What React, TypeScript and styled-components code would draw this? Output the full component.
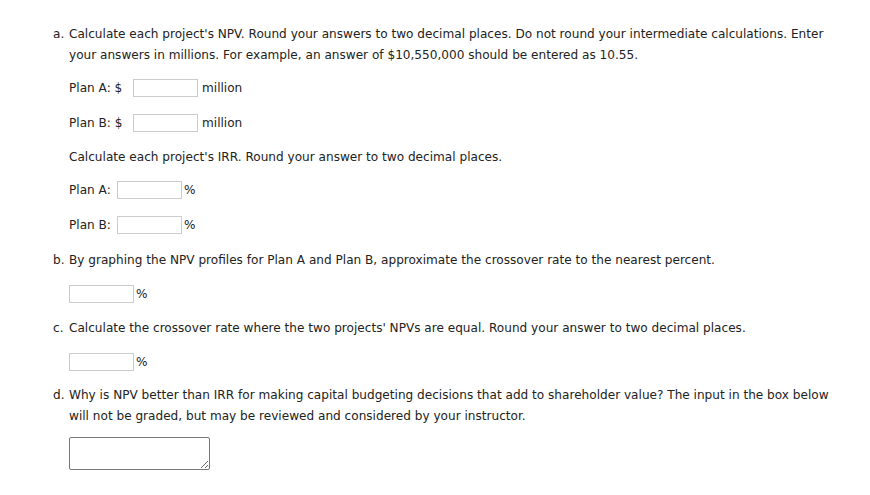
import React from 'react';
import styled, { createGlobalStyle } from 'styled-components';

const Global = createGlobalStyle`
  body {
    margin: 0;
    background: #fff;
  }
`;

const Page = styled.div`
  padding: 24px 0 0 53px;
  font-family: 'DejaVu Sans', Verdana, sans-serif;
  font-size: 12.1px;
  color: #222;
  width: 782px;
`;

const Part = styled.div<{ gap?: number }>`
  display: flex;
  margin-bottom: ${(p) => p.gap ?? 0}px;
`;

const Letter = styled.span`
  width: 16px;
  flex: none;
  line-height: 21px;
`;

const Body = styled.div`
  flex: 1;
`;

const Prompt = styled.p<{ top?: number }>`
  margin: ${(p) => p.top ?? 0}px 0 0;
  line-height: 21px;
`;

const Row = styled.div<{ top: number }>`
  display: flex;
  align-items: center;
  height: 18px;
  margin-top: ${(p) => p.top}px;
`;

const Label = styled.span<{ w: number }>`
  width: ${(p) => p.w}px;
  flex: none;
`;

const Box = styled.input`
  width: 65px;
  height: 18px;
  box-sizing: border-box;
  border: 1px solid #ccc;
  margin: 0;
  padding: 0 3px;
  font: inherit;
`;

const Unit = styled.span<{ gap?: number }>`
  margin-left: ${(p) => p.gap ?? 4}px;
`;

const Area = styled.textarea`
  display: block;
  width: 141px;
  height: 33px;
  box-sizing: border-box;
  border: 1px solid #777;
  border-radius: 2px;
  margin: 10px 0 0;
  padding: 2px;
  font: inherit;
`;

const App = () => (
  <>
    <Global />
    <Page>
      <Part gap={16}>
        <Letter>a.</Letter>
        <Body>
          <Prompt>
            Calculate each project's NPV. Round your answers to two decimal places. Do not round your intermediate
            calculations. Enter your answers in millions. For example, an answer of $10,550,000 should be entered as
            10.55.
          </Prompt>
          <Row top={13}>
            <Label w={64}>Plan A: $</Label>
            <Box />
            <Unit>million</Unit>
          </Row>
          <Row top={17}>
            <Label w={64}>Plan B: $</Label>
            <Box />
            <Unit>million</Unit>
          </Row>
          <Prompt top={15}>Calculate each project's IRR. Round your answer to two decimal places.</Prompt>
          <Row top={13}>
            <Label w={48}>Plan A:</Label>
            <Box />
            <Unit gap={2}>%</Unit>
          </Row>
          <Row top={17}>
            <Label w={48}>Plan B:</Label>
            <Box />
            <Unit gap={2}>%</Unit>
          </Row>
        </Body>
      </Part>
      <Part gap={15}>
        <Letter>b.</Letter>
        <Body>
          <Prompt>By graphing the NPV profiles for Plan A and Plan B, approximate the crossover rate to the nearest percent.</Prompt>
          <Row top={14}>
            <Box />
            <Unit gap={2}>%</Unit>
          </Row>
        </Body>
      </Part>
      <Part gap={14}>
        <Letter>c.</Letter>
        <Body>
          <Prompt>Calculate the crossover rate where the two projects' NPVs are equal. Round your answer to two decimal places.</Prompt>
          <Row top={14}>
            <Box />
            <Unit gap={2}>%</Unit>
          </Row>
        </Body>
      </Part>
      <Part>
        <Letter>d.</Letter>
        <Body>
          <Prompt>
            Why is NPV better than IRR for making capital budgeting decisions that add to shareholder value? The input
            in the box below will not be graded, but may be reviewed and considered by your instructor.
          </Prompt>
          <Area />
        </Body>
      </Part>
    </Page>
  </>
);

export default App;
